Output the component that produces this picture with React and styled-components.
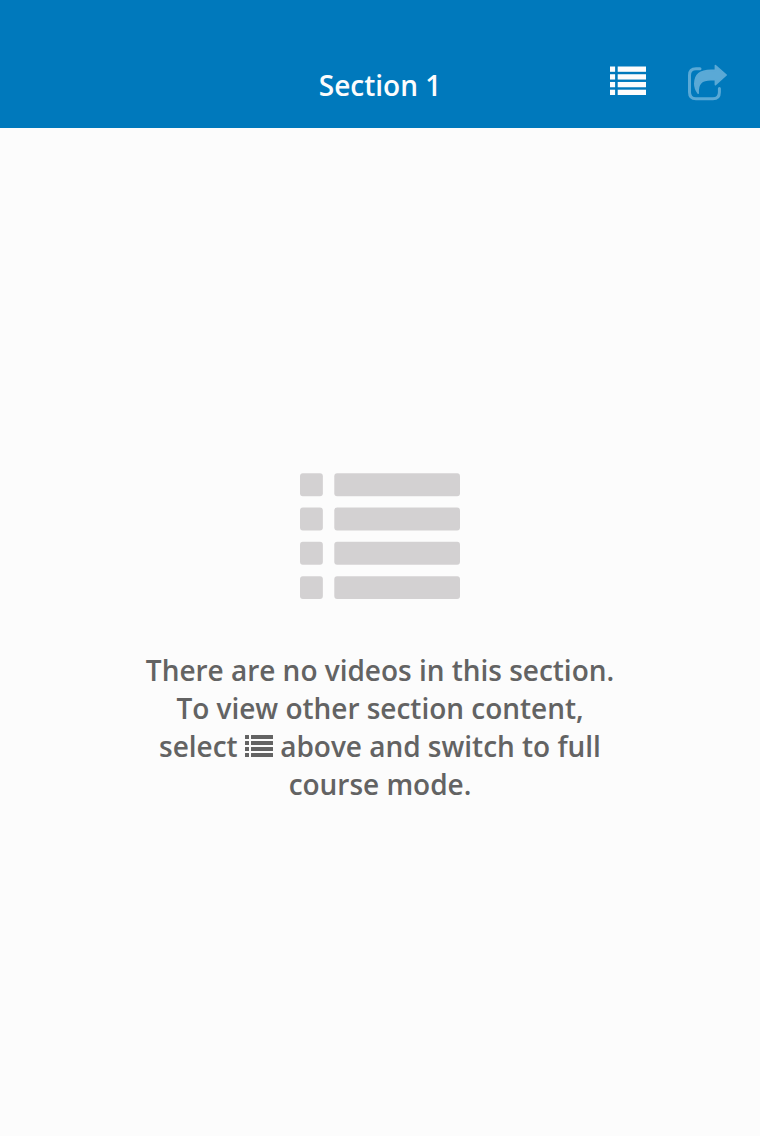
import React from 'react';
import styled, { createGlobalStyle } from 'styled-components';

const GlobalStyle = createGlobalStyle`
  body {
    margin: 0;
    background: #fcfcfc;
    font-family: "Open Sans", "Noto Sans", sans-serif;
  }
`;

const Screen = styled.div`
  min-height: 1136px;
  display: flex;
  flex-direction: column;
  background: #fcfcfc;
`;

const Header = styled.header`
  height: 128px;
  box-sizing: border-box;
  padding: 44px 32px 0;
  display: grid;
  grid-template-columns: 1fr auto 1fr;
  align-items: start;
  background: #0079bc;
`;

const Title = styled.h1`
  grid-column: 2;
  margin: 0;
  padding-top: 22px;
  font-size: 28px;
  line-height: 38px;
  font-weight: 560;
  color: #fcfcfc;
`;

const Actions = styled.div`
  display: flex;
  justify-content: flex-end;
  gap: 41px;
  padding-top: 20px;
`;

const IconButton = styled.button`
  display: flex;
  align-items: flex-start;
  padding: ${(p) => p.$top || 0}px 0 0;
  border: 0;
  background: none;
  color: ${(p) => p.$color};
`;

const Main = styled.main`
  display: flex;
  flex-direction: column;
  align-items: center;
  padding-top: 345px;
  color: #d3d1d2;
`;

const Message = styled.p`
  width: 480px;
  margin: 52px 0 0;
  font-size: 28px;
  line-height: 38px;
  font-weight: 560;
  letter-spacing: -0.02px;
  text-align: center;
  color: #636363;
`;

const InlineIcon = styled.span`
  display: inline-block;
  height: 22px;
  line-height: 0;
  vertical-align: baseline;
`;

function ListIcon({ width, height, square, barX, thickness, radius, inset = 0 }) {
  const pitch = (height - inset - thickness) / 3;
  return (
    <svg width={width} height={height} viewBox={`0 0 ${width} ${height}`} fill="currentColor" aria-hidden="true">
      {[0, 1, 2, 3].map((row) => (
        <g key={row}>
          <rect x="0" y={inset + row * pitch} width={square} height={thickness} rx={radius} />
          <rect x={barX} y={inset + row * pitch} width={width - barX} height={thickness} rx={radius} />
        </g>
      ))}
    </svg>
  );
}

function ShareIcon() {
  return (
    <svg width="41" height="38" viewBox="0 0 41 38" aria-hidden="true">
      <path
        d="M13 4.7H9Q2.5 4.7 2.5 11.2V28.3Q2.5 34.8 9 34.8H25.9Q32.4 34.8 32.4 28.3V24.4"
        fill="none"
        stroke="currentColor"
        strokeWidth="3"
        strokeLinecap="round"
      />
      <path
        d="M28.4 1.5L39.2 11L28.4 20.6V15.8H24C14.5 15.8 10.4 19.5 11.2 29.2C8.6 26 7.8 23 7.8 19.8C7.8 10 13.5 6.4 24 6.4H28.4Z"
        fill="currentColor"
        stroke="currentColor"
        strokeWidth="1.6"
        strokeLinejoin="round"
      />
    </svg>
  );
}

export default function App() {
  return (
    <Screen>
      <GlobalStyle />
      <Header>
        <Title>Section 1</Title>
        <Actions>
          <IconButton $color="#fcfcfc" $top={2} aria-label="Switch course mode">
            <ListIcon width={36} height={29} square={5.1} barX={7.7} thickness={5.3} radius={0} inset={0.5} />
          </IconButton>
          <IconButton $color="#5aa9d6" aria-label="Share">
            <ShareIcon />
          </IconButton>
        </Actions>
      </Header>
      <Main>
        <ListIcon width={160} height={126} square={22.86} barX={34.29} thickness={22.86} radius={2.9} inset={0.3} />
        <Message>
          There are no videos in this section.
          <br />
          To view other section content,
          <br />
          select{' '}
          <InlineIcon>
            <ListIcon width={28} height={22} square={4} barX={6} thickness={4} radius={0.3} />
          </InlineIcon>{' '}
          above and switch to full
          <br />
          course mode.
        </Message>
      </Main>
    </Screen>
  );
}
